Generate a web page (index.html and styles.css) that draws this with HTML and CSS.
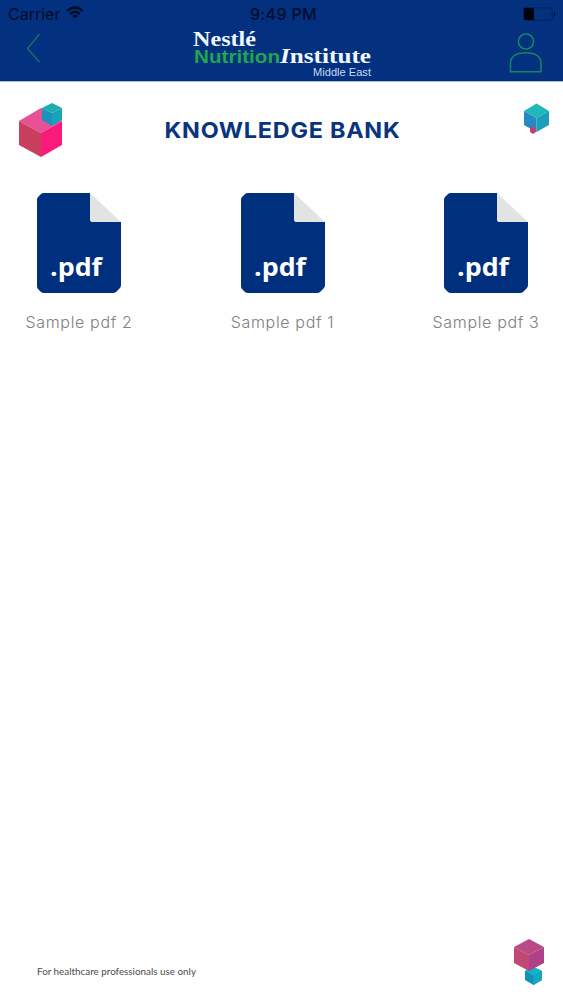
FILE: index.html
```html
<!DOCTYPE html>
<html lang="en">
<head>
<meta charset="utf-8">
<title>Knowledge Bank</title>
<link rel="stylesheet" href="styles.css">
</head>
<body>
<div class="screen">
  <header class="header">
    <div class="status">
      <div class="carrier"><span>Carrier</span>
        <svg width="18" height="14" viewBox="0 0 18 14"><g fill="none" stroke="#020a20" stroke-width="2.3"><path d="M1.200 5Q9-2 16.800 5"/><path d="M4.200 8Q9 3.500 13.800 8"/></g><path d="M6.200 9.800Q9 7.600 11.800 9.800L9 12.600Z" fill="#020a20"/></svg>
      </div>
      <div class="time">9:49 PM</div>
      <svg class="battery" width="34" height="14" viewBox="0 0 34 14"><rect x=".75" y=".75" width="28.500" height="12.500" rx="2" fill="none" stroke="#04205a"/><path d="M1 1H11V13H1Z" fill="#01030a"/><path d="M31 4.500Q33.500 7 31 9.500Z" fill="#020a20"/></svg>
    </div>
    <div class="nav">
      <svg class="back" width="16" height="32" viewBox="0 0 16 32"><path d="M13.500 2L1.500 16.500L13.500 30" fill="none" stroke="#197a60" stroke-width="1.200"/></svg>
      <svg class="logo" width="182" height="53" viewBox="192 28 182 53">
        <text class="logo-serif" x="193" y="45.500" textLength="63" lengthAdjust="spacingAndGlyphs">Nestlé</text>
        <text class="logo-sans" x="194" y="63" textLength="86" lengthAdjust="spacingAndGlyphs">Nutrition</text>
        <text class="logo-serif" x="280" y="63" textLength="91" lengthAdjust="spacingAndGlyphs"><tspan font-style="italic">I</tspan>nstitute</text>
        <text class="logo-region" x="313" y="76" textLength="58" lengthAdjust="spacingAndGlyphs">Middle East</text>
      </svg>
      <svg class="user" width="34" height="42" viewBox="0 0 34 42"><g fill="none" stroke="#178660" stroke-width="1.500"><circle cx="17" cy="9.500" r="7.600"/><path d="M1.500 39.700V32Q1.500 20.800 16.800 20.800T32 32V39.700Z"/></g></svg>
    </div>
  </header>
  <main class="content">
    <div class="title-row">
      <svg width="46" height="56" viewBox="18 102 46 56"><path d="M19 121L41 108L62 121L41 133Z" fill="#e75297"/><path d="M19 121L41 133V157L19 145Z" fill="#c9405f"/><path d="M41 133L62 121V145L41 157Z" fill="#f91b7b"/><path d="M42 108L52 103L62 108L52 113Z" fill="#1aadb1"/><path d="M42 108L52 113V126L42 120Z" fill="#1b91bb"/><path d="M52 113L62 108V120L52 126Z" fill="#18a4b8"/></svg>
      <svg class="heading" width="240" height="30" viewBox="0 0 240 30" role="heading"><text class="title" x="1.500" y="23" textLength="236" lengthAdjust="spacingAndGlyphs">KNOWLEDGE BANK</text></svg>
      <svg width="27" height="56" viewBox="523 102 27 56"><path d="M524 111L536.500 103.500L549 111L536.500 118Z" fill="#22b7b9"/><path d="M524 111L536.500 118V132L524 125Z" fill="#238bc0"/><path d="M536.500 118L549 111V125L536.500 132Z" fill="#199fba"/><path d="M530 128L533 126.500L536 128V132L533 134L530 132Z" fill="#c44078"/></svg>
    </div>
    <div class="files">
      <div class="file">
        <svg width="86" height="102" viewBox="0 0 86 102"><path d="M8 1H54V27Q54 30 57 30H85V93Q85 95 83.500 96.500L80 100Q79 101 77 101H8Q6 101 5 100L2 97Q1 96 1 94V8Q1 6 2 5L5 2Q6 1 8 1Z" fill="#002f7e"/><path d="M54 1L85 30H57Q54 30 54 27Z" fill="#e2e3e3"/><text class="ext" x="14" y="84" textLength="52" lengthAdjust="spacingAndGlyphs">.pdf</text></svg>
        <span class="name">Sample pdf 2</span>
      </div>
      <div class="file">
        <svg width="86" height="102" viewBox="0 0 86 102"><path d="M8 1H54V27Q54 30 57 30H85V93Q85 95 83.500 96.500L80 100Q79 101 77 101H8Q6 101 5 100L2 97Q1 96 1 94V8Q1 6 2 5L5 2Q6 1 8 1Z" fill="#002f7e"/><path d="M54 1L85 30H57Q54 30 54 27Z" fill="#e2e3e3"/><text class="ext" x="14" y="84" textLength="52" lengthAdjust="spacingAndGlyphs">.pdf</text></svg>
        <span class="name">Sample pdf 1</span>
      </div>
      <div class="file">
        <svg width="86" height="102" viewBox="0 0 86 102"><path d="M8 1H54V27Q54 30 57 30H85V93Q85 95 83.500 96.500L80 100Q79 101 77 101H8Q6 101 5 100L2 97Q1 96 1 94V8Q1 6 2 5L5 2Q6 1 8 1Z" fill="#002f7e"/><path d="M54 1L85 30H57Q54 30 54 27Z" fill="#e2e3e3"/><text class="ext" x="14" y="84" textLength="52" lengthAdjust="spacingAndGlyphs">.pdf</text></svg>
        <span class="name">Sample pdf 3</span>
      </div>
    </div>
  </main>
  <footer class="footer">
    <svg class="note" width="162" height="16" viewBox="0 0 162 16"><text class="note-text" x="1" y="11" textLength="159" lengthAdjust="spacingAndGlyphs">For healthcare professionals use only</text></svg>
    <svg width="34" height="48" viewBox="512 938 34 48"><path d="M525 971L533.500 967L542 971V980L533.500 985L525 980Z" fill="#1290bd"/><path d="M533.500 976L542 971V980L533.500 985Z" fill="#15a8c5"/><path d="M525 971L533.500 967L542 971L533.500 976Z" fill="#14b2c5"/><path d="M514 947L529 939L544 947L529 955Z" fill="#b94a86"/><path d="M514 947L529 955V971L514 963Z" fill="#c14875"/><path d="M529 955L544 947V963L529 971Z" fill="#ae4187"/></svg>
  </footer>
</div>
</body>
</html>
```
FILE: styles.css
```css
body { margin: 0; background: #fefefe; font-family: Inter, "Liberation Sans", sans-serif; }
svg { display: block; flex: none; }
.screen { width: 563px; height: 1000px; display: flex; flex-direction: column; overflow: hidden; }
.header { height: 82px; background: #03307f; background-clip: padding-box; border-bottom: 1px solid #a9b9d4; box-sizing: border-box; flex: none; }
.status { height: 28px; display: grid; grid-template-columns: 1fr auto 1fr; align-items: center; padding: 0 6px 0 8px; color: #020d2a; font-size: 16px; line-height: 28px; }
.carrier { display: flex; align-items: center; gap: 6px; }
.carrier svg { margin-top: -2px; }
.time { font-weight: 500; font-size: 16px; letter-spacing: .35px; margin-left: 2px; }
.battery { justify-self: end; }
.nav { height: 53px; display: flex; justify-content: space-between; align-items: flex-start; padding: 0 20px 0 26px; }
.back { margin-top: 4px; }
.logo { margin-left: 150px; margin-right: auto; }
.user { margin-top: 4px; }
.logo-serif { font: 700 20px "Liberation Serif", serif; fill: #f0f8ff; }
.logo-sans { font: 700 19px "Liberation Sans", sans-serif; fill: #20a550; }
.logo-region { font: 11px "Liberation Sans", sans-serif; fill: #c5dcf3; }
.content { flex: 1; }
.title-row { display: flex; align-items: center; justify-content: space-between; padding: 20px 13px 0 18px; height: 56px; }
.heading { margin-right: 22px; }
.title { font-size: 22px; font-weight: 700; letter-spacing: .7px; fill: #0a357c; }
.files { display: flex; justify-content: space-between; padding: 34px 24px 0 26px; }
.file { width: 106px; display: flex; flex-direction: column; align-items: center; gap: 16px; }
.ext { font: 700 25px "Open Sans", sans-serif; fill: #fff; }
.name { color: #808080; font-size: 16px; line-height: 24px; font-weight: 300; letter-spacing: .65px; white-space: nowrap; }
.footer { display: flex; justify-content: space-between; align-items: flex-start; padding: 0 17px 14px 36px; }
.note { margin-top: 26px; }
.note-text { font: 10px Lato, sans-serif; fill: #4c4c4c; }
```
